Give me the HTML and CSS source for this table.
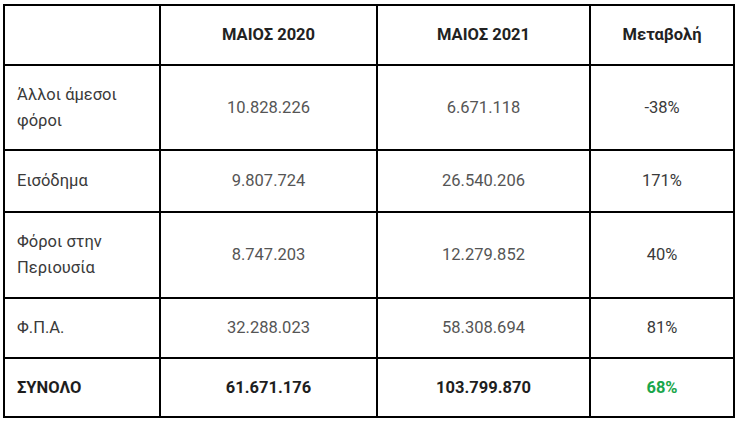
FILE: index.html
```
<!DOCTYPE html>
<html lang="el">
<head>
<meta charset="utf-8">
<link rel="stylesheet" href="styles.css">
</head>
<body>
<table class="tax">
  <colgroup>
    <col class="c1"><col class="c2"><col class="c3"><col class="c4">
  </colgroup>
  <tr class="r0">
    <th></th>
    <th>ΜΑΙΟΣ 2020</th>
    <th>ΜΑΙΟΣ 2021</th>
    <th>Μεταβολή</th>
  </tr>
  <tr class="r1">
    <td class="label">Άλλοι άμεσοι φόροι</td>
    <td class="num">10.828.226</td>
    <td class="num">6.671.118</td>
    <td class="pct">-38%</td>
  </tr>
  <tr class="r2">
    <td class="label">Εισόδημα</td>
    <td class="num">9.807.724</td>
    <td class="num">26.540.206</td>
    <td class="pct">171%</td>
  </tr>
  <tr class="r3">
    <td class="label">Φόροι στην Περιουσία</td>
    <td class="num">8.747.203</td>
    <td class="num">12.279.852</td>
    <td class="pct">40%</td>
  </tr>
  <tr class="r4">
    <td class="label">Φ.Π.Α.</td>
    <td class="num">32.288.023</td>
    <td class="num">58.308.694</td>
    <td class="pct">81%</td>
  </tr>
  <tr class="r5 total">
    <td class="label">ΣΥΝΟΛΟ</td>
    <td class="num">61.671.176</td>
    <td class="num">103.799.870</td>
    <td class="pct up">68%</td>
  </tr>
</table>
</body>
</html>
```
FILE: styles.css
```
html, body {
  background: #fff;
}
body {
  margin: 0;
  padding: 4px 0 0 3px;
  font-family: Roboto, "Noto Sans", sans-serif;
  font-size: 16.5px;
  color: #333;
}
.tax {
  border-collapse: collapse;
  table-layout: fixed;
  width: 730px;
  border: 2px solid #000;
}
.c1 { width: 156px; }
.c2 { width: 217px; }
.c3 { width: 213px; }
.c4 { width: 144px; }
.tax th, .tax td {
  border: 2px solid #000;
  padding: 0 12px;
  text-align: center;
  vertical-align: middle;
  line-height: 26px;
}
.tax th {
  font-weight: 700;
  color: #222;
}
.r0 { height: 60px; }
.r1 { height: 85px; }
.r2 { height: 62px; }
.r3 { height: 86px; }
.r4 { height: 60px; }
.r5 { height: 59px; }
.tax td.label {
  text-align: left;
  color: #3a3a3a;
}
.num { color: #555; }
.pct { color: #3a3a3a; }
.total td, .tax .total td.label {
  font-weight: 700;
  color: #1e1e1e;
}
.tax .total td.up {
  color: #1aa64b;
}
```
